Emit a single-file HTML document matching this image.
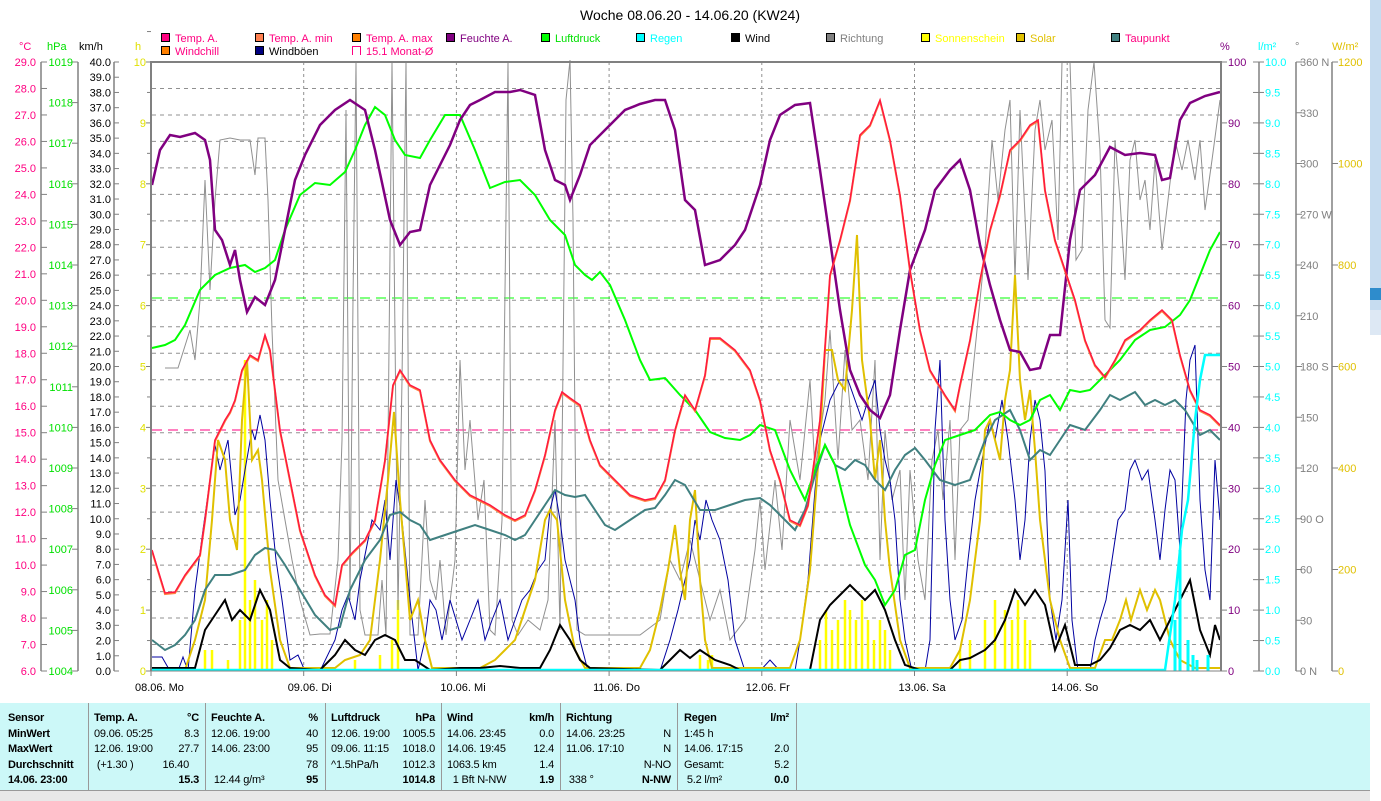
<!DOCTYPE html>
<html><head><meta charset="utf-8"><style>
body{margin:0;background:#fff;width:1381px;height:800px;overflow:hidden;font-family:"Liberation Sans",sans-serif}
svg{position:absolute;left:0;top:0}
text{font-family:"Liberation Sans",sans-serif;font-size:11px}
.tb{position:absolute;left:0;top:703px;width:1370px;height:87px;background:#ccf8f8}
.col{position:absolute;top:8px;font-size:11px;line-height:15.5px;color:#000;letter-spacing:-0.2px}
.col div{white-space:nowrap;position:relative;height:15.5px}
.r{position:absolute;right:0;top:0}
.sep{position:absolute;top:0;width:1px;height:87px;background:#999}
b{font-weight:bold}
</style></head><body>
<svg width="1381" height="800" viewBox="0 0 1381 800">
<defs>
<polyline id="tp" fill="none" points="152,550 158,570 165,593 175,592 185,575 200,555 205,520 215,440 225,420 230,412 235,400 242,370 250,355 258,360 265,335 270,350 280,430 290,480 300,530 315,575 325,595 335,605 342,565 352,553 365,540 375,520 385,460 393,385 400,370 410,385 420,390 430,440 440,460 455,480 470,495 490,505 505,515 515,520 525,515 535,490 545,455 555,410 562,392 570,398 580,405 590,440 600,465 615,480 630,495 645,500 655,498 665,480 675,430 685,395 695,410 705,375 710,338 720,338 735,350 750,370 760,400 770,450 780,480 790,520 800,525 808,505 820,420 830,275 840,240 850,200 860,135 870,125 880,100 890,140 900,195 910,270 920,330 930,370 945,395 955,410 960,385 970,340 980,280 990,230 1000,195 1010,150 1020,140 1030,125 1038,120 1045,190 1055,240 1065,270 1075,300 1085,340 1095,365 1105,377 1115,360 1125,340 1140,330 1150,320 1162,310 1172,320 1180,355 1190,390 1200,410 1210,415 1220,425"/>
</defs>
<rect x="1370" y="0" width="11" height="335" fill="#c6dcf0"/>
<rect x="1370" y="288" width="11" height="12" fill="#2e8ccc"/>
<rect x="1370" y="310" width="11" height="25" fill="#dde8f4"/>
<text x="690" y="20" text-anchor="middle" style="font-size:14px">Woche 08.06.20 - 14.06.20 (KW24)</text>
<g stroke="#000" stroke-width="1">
<rect x="161.5" y="33.5" width="8" height="8" fill="#ff0080"/>
<rect x="255.5" y="33.5" width="8" height="8" fill="#ff8050"/>
<rect x="352.5" y="33.5" width="8" height="8" fill="#ff8000"/>
<rect x="446.5" y="33.5" width="8" height="8" fill="#800080"/>
<rect x="541.5" y="33.5" width="8" height="8" fill="#00ff00"/>
<rect x="636.5" y="33.5" width="8" height="8" fill="#00ffff"/>
<rect x="731.5" y="33.5" width="8" height="8" fill="#000"/>
<rect x="826.5" y="33.5" width="8" height="8" fill="#808080"/>
<rect x="921.5" y="33.5" width="8" height="8" fill="#ffff00"/>
<rect x="1016.5" y="33.5" width="8" height="8" fill="#e0c000"/>
<rect x="1111.5" y="33.5" width="8" height="8" fill="#408080"/>
<rect x="161.5" y="46.5" width="8" height="8" fill="#ff8000"/>
<rect x="255.5" y="46.5" width="8" height="8" fill="#000080"/>
</g>
<path d="M352.5 55V46.5H360.5V55" fill="none" stroke="#ff0080"/>
<g style="font-size:11px">
<text x="175" y="42" fill="#ff0080">Temp. A.</text>
<text x="269" y="42" fill="#ff0080">Temp. A. min</text>
<text x="366" y="42" fill="#ff0080">Temp. A. max</text>
<text x="460" y="42" fill="#800080">Feuchte A.</text>
<text x="555" y="42" fill="#00e000">Luftdruck</text>
<text x="650" y="42" fill="#00ffff">Regen</text>
<text x="745" y="42" fill="#000">Wind</text>
<text x="840" y="42" fill="#808080">Richtung</text>
<text x="935" y="42" fill="#ffff00">Sonnenschein</text>
<text x="1030" y="42" fill="#e0c000">Solar</text>
<text x="1125" y="42" fill="#ff0080">Taupunkt</text>
<text x="175" y="55" fill="#ff0080">Windchill</text>
<text x="269" y="55" fill="#000">Windböen</text>
<text x="366" y="55" fill="#ff0080">15.1 Monat-Ø</text>
<text x="19" y="50" fill="#ff0080">°C</text>
<text x="47" y="50" fill="#00e000">hPa</text>
<text x="79" y="50" fill="#000">km/h</text>
<text x="135" y="50" fill="#e0e000">h</text>
<text x="1220" y="50" fill="#800080">%</text>
<text x="1258" y="50" fill="#00ffff">l/m²</text>
<text x="1295" y="50" fill="#808080">°</text>
<text x="1332" y="50" fill="#e0c000">W/m²</text>
</g>
<g stroke="#808080" stroke-width="1.5" fill="none">
<path d="M41 62V671M78 62V671M114 62V671M1259 62V671M1296 62V671M1332 62V671"/>
</g>
<g id="ticks" stroke="#808080" stroke-width="1"></g>
<g id="labels"></g>
<g id="grid" stroke="#909090" stroke-width="1" stroke-dasharray="4,4" fill="none"></g>
<path d="M152 298H1220" stroke="#00ff00" stroke-dasharray="10,6"/>
<path d="M152 430H1220" stroke="#ff0080" stroke-dasharray="10,6"/>
<g id="bars" stroke="#ffff00" stroke-width="2.5"></g>
<polyline fill="none" stroke="#909090" stroke-width="1" points="165,368 178,368 190,330 195,360 200,300 205,180 210,290 215,200 220,140 230,138 240,140 250,140 255,175 258,138 265,138 268,200 272,330 278,480 285,520 292,560 300,600 310,635 320,634 330,634 338,560 342,440 346,110 350,600 353,300 356,62 360,610 365,635 378,635 382,580 386,635 392,62 398,610 402,380 406,62 410,635 418,635 425,500 430,580 436,600 440,560 446,635 455,560 460,360 465,470 470,420 478,520 484,480 490,630 495,635 502,520 508,62 512,620 518,635 528,620 540,630 548,600 555,420 560,630 566,100 570,60 573,220 577,630 585,635 600,635 620,635 640,635 660,620 670,560 680,580 690,540 700,580 710,620 720,590 730,640 745,620 755,550 760,500 765,570 775,480 782,550 790,420 800,480 810,380 815,470 825,400 830,330 838,460 845,350 852,430 860,420 868,480 875,360 880,560 885,430 892,500 900,470 905,600 910,470 918,560 925,600 932,460 938,430 943,500 950,420 955,560 960,430 968,420 975,350 985,250 992,140 998,200 1005,130 1010,100 1015,280 1020,110 1028,280 1035,130 1040,100 1045,150 1052,120 1058,240 1062,62 1070,62 1076,260 1082,250 1088,110 1094,62 1100,150 1105,320 1110,328 1115,140 1120,200 1125,280 1130,160 1135,140 1140,200 1145,180 1150,230 1155,160 1162,250 1168,200 1175,140 1182,170 1188,140 1195,180 1200,140 1205,210 1212,160 1220,100"/>
<polyline fill="none" stroke="#0000a0" stroke-width="1" points="152,657 162,657 170,671 178,671 183,657 188,671 195,590 203,530 210,480 215,445 220,470 228,440 235,515 240,500 245,470 252,430 255,440 260,415 265,440 270,500 276,560 282,600 290,660 298,655 305,671 320,671 335,640 342,610 348,595 355,620 360,580 368,540 372,520 380,530 385,500 390,560 396,480 402,520 410,600 418,670 425,640 430,600 436,610 442,640 450,600 456,620 462,640 470,620 478,600 485,640 492,620 500,600 508,640 515,620 522,600 530,590 538,570 545,560 550,510 555,490 560,520 565,560 570,580 575,600 580,640 588,671 600,671 660,671 670,640 678,610 685,580 690,560 695,520 700,540 706,500 712,520 720,540 728,580 735,640 745,671 760,671 770,660 780,671 795,671 800,640 808,580 815,490 820,440 830,400 840,380 848,380 855,400 862,420 868,400 875,380 880,430 885,460 890,480 895,520 900,600 905,640 912,671 925,671 930,640 935,430 940,360 945,520 950,600 955,640 962,620 968,560 975,500 982,460 990,420 995,440 1002,400 1008,440 1015,500 1020,560 1025,520 1030,440 1035,400 1040,420 1045,471 1050,600 1056,640 1062,600 1068,500 1072,620 1078,671 1090,671 1095,640 1100,620 1106,600 1112,560 1118,520 1125,510 1130,470 1135,460 1142,480 1148,470 1155,520 1160,560 1165,510 1170,470 1175,480 1180,550 1186,400 1190,360 1195,345 1200,500 1205,570 1210,600 1215,460 1220,520"/>
<polyline fill="none" stroke="#e0c000" stroke-width="2" points="185,670 195,640 205,600 212,520 218,440 225,460 230,520 237,550 242,420 247,360 252,460 258,450 262,480 270,570 280,640 290,668 335,668 345,660 360,655 370,640 380,560 388,480 394,412 400,500 405,560 410,620 418,600 425,640 432,668 480,668 495,660 505,650 515,640 525,610 535,580 545,520 550,510 557,520 565,600 575,650 585,668 640,668 650,650 660,610 668,570 675,525 680,570 685,600 690,520 695,490 700,580 705,640 712,668 790,668 800,640 810,570 820,440 825,350 832,350 838,380 845,390 852,310 857,235 862,360 870,420 875,480 880,440 885,520 890,570 900,640 910,668 950,668 960,650 970,600 980,520 985,430 990,420 995,440 1000,460 1005,400 1010,370 1015,275 1020,380 1025,420 1030,390 1035,450 1040,520 1050,600 1060,640 1070,668 1095,668 1105,640 1112,640 1120,620 1126,600 1131,620 1140,590 1147,610 1155,590 1160,600 1170,640 1180,660 1195,668 1220,668"/>
<polyline fill="none" stroke="#408080" stroke-width="2" points="152,640 165,650 175,645 185,635 195,620 205,590 215,575 230,575 245,570 255,555 265,548 275,550 285,565 300,590 315,615 330,630 340,627 350,590 365,560 380,540 390,515 400,512 410,520 420,525 430,540 445,535 460,530 475,525 490,530 505,535 515,540 525,535 535,520 545,505 555,490 565,495 575,497 585,495 595,510 605,525 615,530 630,520 645,510 655,508 665,495 675,480 685,485 700,510 715,510 730,505 745,500 760,498 770,505 785,520 795,530 805,510 815,475 825,445 835,465 845,470 855,460 865,465 875,480 885,490 895,470 905,455 915,448 925,460 940,480 955,485 970,480 985,440 995,420 1010,410 1020,430 1030,460 1040,450 1050,455 1060,440 1070,425 1085,430 1100,410 1110,395 1120,400 1135,392 1145,405 1155,400 1165,405 1175,400 1185,410 1200,435 1210,430 1220,440"/>
<polyline fill="none" stroke="#00ff00" stroke-width="2" points="152,348 165,345 175,340 185,325 200,290 215,275 230,268 245,265 255,272 265,268 275,260 285,230 300,195 315,183 330,185 345,172 355,150 365,125 375,107 385,115 395,140 405,155 420,158 430,140 445,115 460,115 475,150 490,188 505,182 520,180 535,195 550,220 565,235 575,265 585,275 592,280 600,272 610,285 625,320 640,360 650,380 665,378 680,395 695,410 710,432 725,438 740,440 750,435 760,425 775,430 790,470 805,500 815,470 825,445 835,465 850,525 865,565 875,580 885,605 895,590 905,555 915,550 925,500 935,465 945,440 960,435 975,430 990,415 1000,412 1010,420 1020,425 1030,420 1040,400 1050,395 1060,410 1070,390 1080,392 1090,390 1100,380 1110,370 1120,360 1135,340 1150,330 1165,327 1180,315 1190,300 1200,275 1210,250 1220,232"/>
<polyline fill="none" stroke="#000" stroke-width="2" points="152,668 195,668 205,630 215,615 225,600 232,620 240,610 250,620 260,590 270,610 280,660 290,668 320,670 335,655 345,640 355,650 365,655 375,640 385,635 395,640 405,660 415,660 430,670 460,668 480,668 500,666 520,668 540,668 550,650 560,625 570,640 580,660 590,668 660,670 670,660 680,650 690,658 700,650 715,660 730,665 740,670 810,670 820,620 830,605 840,595 850,585 855,590 865,600 875,590 885,610 895,640 905,665 920,670 950,670 960,660 970,658 985,650 995,640 1005,620 1015,590 1025,605 1035,590 1045,605 1055,650 1065,625 1075,665 1090,665 1100,660 1110,648 1120,630 1130,625 1140,630 1150,620 1160,640 1170,620 1180,600 1190,580 1200,630 1210,655 1215,625 1220,640"/>
<polyline fill="none" stroke="#800080" stroke-width="2.5" points="152,185 160,150 170,135 180,137 195,133 205,140 210,160 215,230 222,240 230,265 235,250 240,280 247,312 255,297 265,305 275,280 285,230 295,180 305,155 320,125 335,110 350,100 365,110 375,150 390,220 400,245 410,232 420,230 430,185 440,165 450,145 460,120 470,105 480,100 495,92 510,92 520,90 535,95 545,150 555,180 565,185 570,200 580,175 590,145 600,135 610,125 625,110 640,104 655,100 665,100 675,130 685,200 695,210 705,265 720,260 735,245 745,230 760,185 770,140 780,115 795,105 810,103 820,170 830,240 840,310 850,370 860,395 870,410 880,418 890,395 900,330 910,270 925,230 935,190 950,170 960,160 970,190 980,245 990,285 1000,320 1010,350 1020,352 1030,370 1040,368 1050,335 1060,335 1070,240 1080,190 1095,175 1110,147 1125,155 1140,153 1155,155 1162,180 1170,178 1180,120 1190,103 1205,96 1220,92"/>
<use href="#tp" stroke="#ff8040" stroke-width="2" transform="translate(0,1)"/>
<use href="#tp" stroke="#ff1840" stroke-width="1.5"/>
<polyline fill="none" stroke="#00ffff" stroke-width="2.5" points="152,670 1165,670 1175,600 1182,530 1188,500 1195,420 1200,380 1205,355 1220,355"/>
<g stroke="#00ffff" stroke-width="3"><path d="M1180 671V550M1175 671V620M1188 671V640M1193 671V655M1197 671V660M1208 671V655"/></g>
<path d="M151 671V62H1221V671" fill="none" stroke="#808080" stroke-width="2"/>
<path d="M151 671H1221" stroke="#808080" stroke-width="1"/>
<g id="days"></g>
</svg>
<div class="tb">
<div class="sep" style="left:88px"></div><div class="sep" style="left:205px"></div><div class="sep" style="left:325px"></div><div class="sep" style="left:441px"></div><div class="sep" style="left:560px"></div><div class="sep" style="left:677px"></div><div class="sep" style="left:796px"></div>
<div class="col" style="left:8px;width:78px"><div><b>Sensor</b></div><div><b>MinWert</b></div><div><b>MaxWert</b></div><div><b>Durchschnitt</b></div><div><b>14.06. 23:00</b></div></div>
<div class="col" style="left:94px;width:105px"><div><b>Temp. A.</b><span class="r"><b>°C</b></span></div><div>09.06. 05:25<span class="r">8.3</span></div><div>12.06. 19:00<span class="r">27.7</span></div><div>&nbsp;(+1.30 )<span class="r" style="right:10px">16.40</span></div><div><span class="r"><b>15.3</b></span></div></div>
<div class="col" style="left:211px;width:107px"><div><b>Feuchte A.</b><span class="r"><b>%</b></span></div><div>12.06. 19:00<span class="r">40</span></div><div>14.06. 23:00<span class="r">95</span></div><div><span class="r">78</span></div><div>&nbsp;12.44 g/m³<span class="r"><b>95</b></span></div></div>
<div class="col" style="left:331px;width:104px"><div><b>Luftdruck</b><span class="r"><b>hPa</b></span></div><div>12.06. 19:00<span class="r">1005.5</span></div><div>09.06. 11:15<span class="r">1018.0</span></div><div>^1.5hPa/h<span class="r">1012.3</span></div><div><span class="r"><b>1014.8</b></span></div></div>
<div class="col" style="left:447px;width:107px"><div><b>Wind</b><span class="r"><b>km/h</b></span></div><div>14.06. 23:45<span class="r">0.0</span></div><div>14.06. 19:45<span class="r">12.4</span></div><div>1063.5 km<span class="r">1.4</span></div><div>&nbsp;&nbsp;1 Bft N-NW<span class="r"><b>1.9</b></span></div></div>
<div class="col" style="left:566px;width:105px"><div><b>Richtung</b></div><div>14.06. 23:25<span class="r">N</span></div><div>11.06. 17:10<span class="r">N</span></div><div><span class="r">N-NO</span></div><div>&nbsp;338 °<span class="r"><b>N-NW</b></span></div></div>
<div class="col" style="left:684px;width:105px"><div><b>Regen</b><span class="r"><b>l/m²</b></span></div><div>1:45 h</div><div>14.06. 17:15<span class="r">2.0</span></div><div>Gesamt:<span class="r">5.2</span></div><div>&nbsp;5.2 l/m²<span class="r"><b>0.0</b></span></div></div>
</div>
<div style="position:absolute;left:0;top:790px;width:1370px;height:10px;background:#e8e8e8;border-top:1px solid #999"></div>
<script>
var NS="http://www.w3.org/2000/svg";
function el(p,t,a,txt){var e=document.createElementNS(NS,t);for(var k in a)e.setAttribute(k,a[k]);if(txt!==undefined)e.textContent=txt;document.getElementById(p).appendChild(e);}
var H=609,T=62,B=671;
for(var i=1;i<23;i++){var y=B-i*H/23;el("grid","path",{d:"M152 "+y.toFixed(1)+"H1220"});}
for(var d=1;d<7;d++){var x=151+d*152.7;el("grid","path",{d:"M"+x.toFixed(1)+" 62V671",'stroke-dasharray':"3,3"});}
var days=["08.06.  Mo","09.06.  Di","10.06.  Mi","11.06.  Do","12.06.  Fr","13.06.  Sa","14.06.  So"];
for(var d=0;d<7;d++){var x=151+d*152.7;el("days","text",{x:x-16,y:691,fill:"#000",'xml:space':"preserve"},days[d]);el("days","path",{d:"M"+x+" 671V676",stroke:"#808080"});}
for(var i=0;i<=23;i++){var y=B-i*H/23;el("labels","text",{x:36,y:y+4,'text-anchor':"end",fill:"#ff0080"},(6+i).toFixed(1));el("ticks","path",{d:"M41 "+y+"H47"});}
for(var i=0;i<=15;i++){var y=B-i*H/15;el("labels","text",{x:73,y:y+4,'text-anchor':"end",fill:"#00e000"},1004+i);el("ticks","path",{d:"M78 "+y+"H72"});}
for(var i=0;i<=40;i++){var y=B-i*H/40;el("labels","text",{x:111,y:y+4,'text-anchor':"end",fill:"#000"},i.toFixed(1));el("ticks","path",{d:"M114 "+y+"H119"});}
for(var i=0;i<=10;i++){var y=B-i*H/10;el("labels","text",{x:146,y:y+4,'text-anchor':"end",fill:"#e0e000"},i);el("ticks","path",{d:"M146 "+y+"H151"});}
for(var i=0;i<20;i++){var y=B-(i+0.5)*H/10;el("ticks","path",{d:"M147 "+y+"H151"});}
for(var i=0;i<=10;i++){var y=B-i*H/10;el("labels","text",{x:1228,y:y+4,fill:"#800080"},i*10);el("ticks","path",{d:"M1221 "+y+"H1227"});}
for(var i=0;i<=20;i++){var y=B-i*H/20;el("labels","text",{x:1265,y:y+4,fill:"#00ffff"},(i/2).toFixed(1));el("ticks","path",{d:"M1253 "+y+"H1264"});}
var dn={0:" N",3:" O",6:" S",9:" W",12:" N"};
for(var i=0;i<=12;i++){var y=B-i*H/12;el("labels","text",{x:1300,y:y+4,fill:"#808080"},(i*30)+(dn[i]||""));el("ticks","path",{d:"M1296 "+y+"H1302"});}
for(var i=0;i<=6;i++){var y=B-i*H/6;el("labels","text",{x:1338,y:y+4,fill:"#e0c000"},i*200);el("ticks","path",{d:"M1332 "+y+"H1338"});}
var bars=[[205,650],[212,650],[228,660],[240,620],[245,360],[250,600],[255,580],[262,620],[267,600],[272,640],[355,660],[380,655],[392,640],[398,600],[700,655],[708,660],[712,655],[820,640],[826,610],[832,630],[838,620],[845,600],[850,610],[856,620],[862,600],[868,620],[874,640],[880,620],[885,630],[890,650],[960,650],[970,640],[985,620],[995,600],[1005,610],[1012,620],[1018,600],[1025,620],[1030,640]];
bars.forEach(function(b){el("bars","path",{d:"M"+b[0]+" 671V"+b[1]});});
</script>
</body></html>
